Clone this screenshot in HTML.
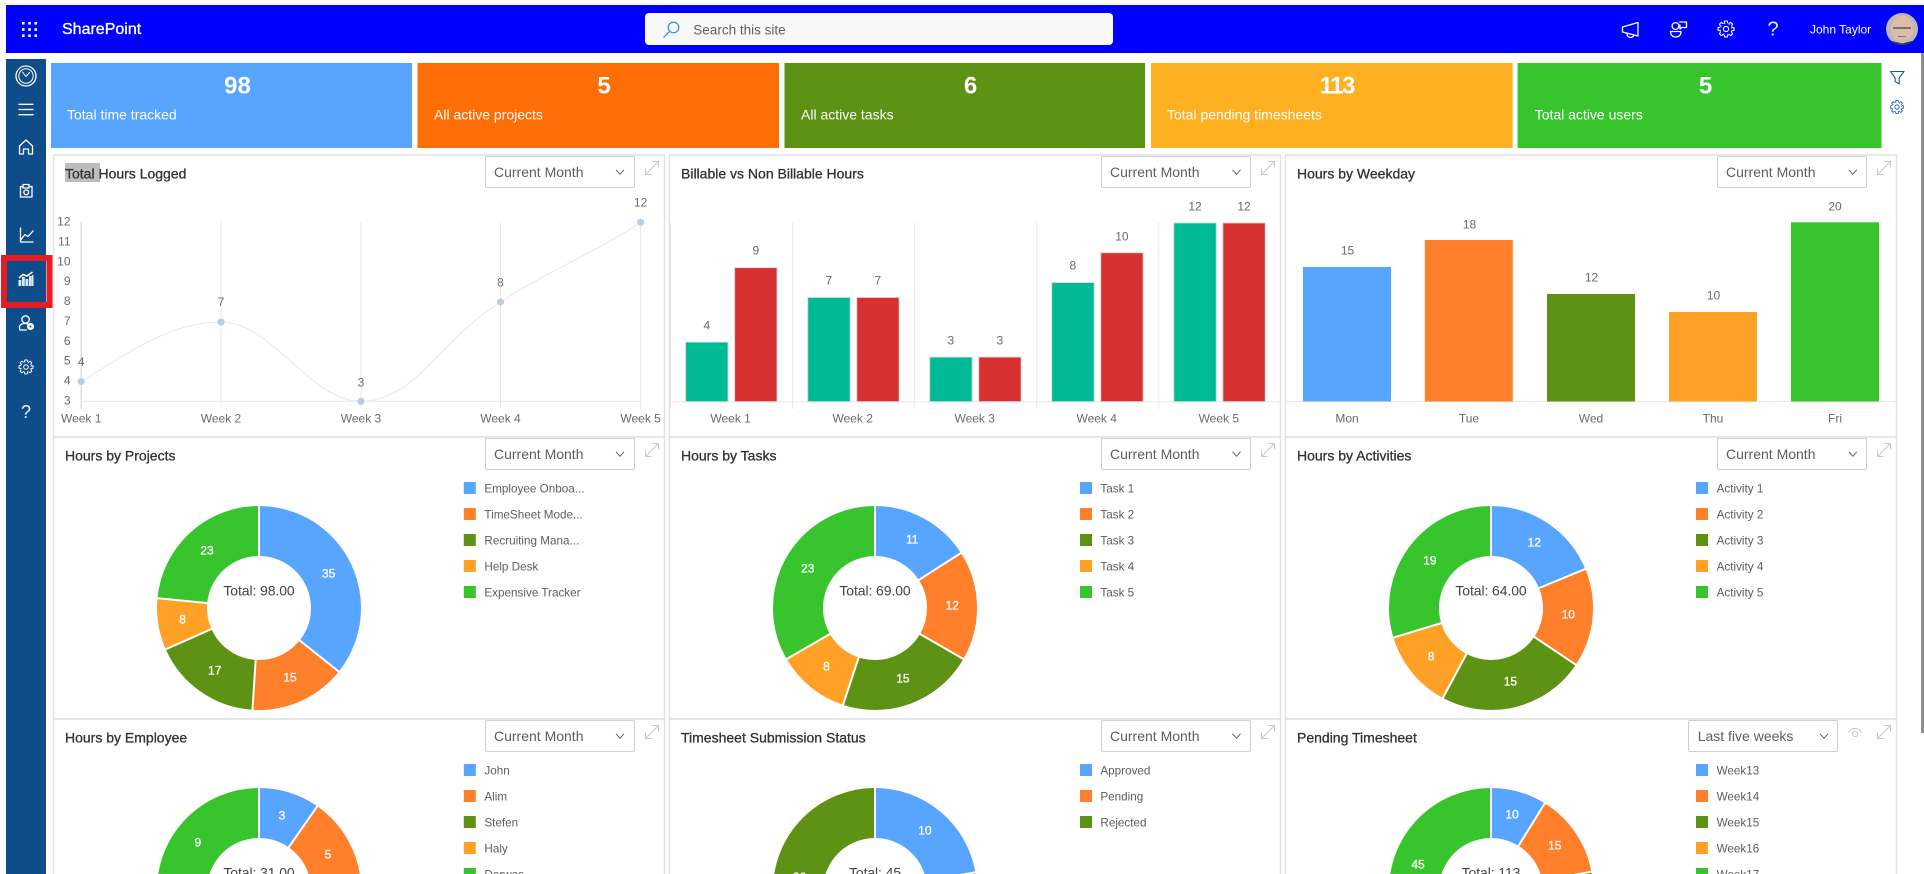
<!DOCTYPE html>
<html lang="en">
<head>
<meta charset="utf-8">
<title>SharePoint Dashboard</title>
<style>
html,body{margin:0;padding:0;background:#fff;width:1924px;height:874px;overflow:hidden}
svg{display:block;font-family:"Liberation Sans",sans-serif}
.title{font-size:14px;fill:#323130;stroke:#323130;stroke-width:.3;dominant-baseline:central}
.dd{font-size:14px;fill:#5f5e5c;dominant-baseline:central}
.box{fill:#fff;stroke:#cfcfcf;stroke-width:1}
.kv{font-size:24px;font-weight:700;fill:#fff;text-anchor:middle;dominant-baseline:central}
.kl{font-size:14px;fill:#fff;dominant-baseline:central}
.ax{font-size:12px;fill:#6a6a6a;dominant-baseline:central}
.m{text-anchor:middle}
.r{text-anchor:end}
.val{font-size:12px;fill:#6a6a6a;text-anchor:middle;dominant-baseline:central}
.dl{font-size:12px;fill:#fff;stroke:#fff;stroke-width:.3;text-anchor:middle;dominant-baseline:central}
.ct{font-size:14px;fill:#444;text-anchor:middle;dominant-baseline:central;letter-spacing:-.1px}
.lg{font-size:11.7px;fill:#605e5c;dominant-baseline:central}
.panel{fill:#fff;stroke:#e2e2e2;stroke-width:1.5}
.grid{stroke:#e8e8e8;stroke-width:1}
.sep{stroke:#fff;stroke-width:2}
.ic{fill:none;stroke:#fff;stroke-width:1.3;stroke-linejoin:round;stroke-linecap:round}
.tb{stroke:#dcdcdc;stroke-width:1}
</style>
</head>
<body>
<svg width="1924" height="874" viewBox="0 0 1924 874" xmlns="http://www.w3.org/2000/svg">
<defs>
<g id="chev"><path d="M-4 -2.2 L0 2.2 L4 -2.2" fill="none" stroke="#666" stroke-width="1"/></g>
<g id="exp"><path d="M-6.5 6.5 L6.5 -6.5 M0.5 -6.5 H6.5 V-0.5 M-6.5 0.5 V6.5 H-0.5" fill="none" stroke="#c6c6c6" stroke-width="1"/></g>
<g id="gear">
<circle r="6.2" fill="none" stroke="currentColor" stroke-width="1.2" stroke-dasharray="1.03 4" stroke-dashoffset="-2"/>
<circle r="2.8" fill="none" stroke="currentColor" stroke-width="1.2"/>
<g fill="none" stroke="currentColor" stroke-width="1.2" stroke-linejoin="round">
<path d="M-2 -6 L-1.4 -8.6 H1.4 L2 -6"/>
<path transform="rotate(45)" d="M-2 -6 L-1.4 -8.6 H1.4 L2 -6"/>
<path transform="rotate(90)" d="M-2 -6 L-1.4 -8.6 H1.4 L2 -6"/>
<path transform="rotate(135)" d="M-2 -6 L-1.4 -8.6 H1.4 L2 -6"/>
<path transform="rotate(180)" d="M-2 -6 L-1.4 -8.6 H1.4 L2 -6"/>
<path transform="rotate(225)" d="M-2 -6 L-1.4 -8.6 H1.4 L2 -6"/>
<path transform="rotate(270)" d="M-2 -6 L-1.4 -8.6 H1.4 L2 -6"/>
<path transform="rotate(315)" d="M-2 -6 L-1.4 -8.6 H1.4 L2 -6"/>
</g>
</g>
</defs>

<rect width="1924" height="874" fill="#fff"/>
<rect x="0" y="3" width="1924" height="1" fill="#fbe9dc"/>

<!-- Top bar -->
<rect x="6" y="5" width="1918" height="48" fill="#0000ff"/>
<g fill="#fff">
<rect x="22" y="22" width="2.6" height="2.6"/><rect x="28.2" y="22" width="2.6" height="2.6"/><rect x="34.4" y="22" width="2.6" height="2.6"/>
<rect x="22" y="28.2" width="2.6" height="2.6"/><rect x="28.2" y="28.2" width="2.6" height="2.6"/><rect x="34.4" y="28.2" width="2.6" height="2.6"/>
<rect x="22" y="34.4" width="2.6" height="2.6"/><rect x="28.2" y="34.4" width="2.6" height="2.6"/><rect x="34.4" y="34.4" width="2.6" height="2.6"/>
</g>
<text x="62" y="29.7" font-size="16" fill="#fff" stroke="#fff" stroke-width=".35" dominant-baseline="central">SharePoint</text>
<rect x="645" y="13" width="468" height="32" rx="4" fill="#f8f8f8"/>
<circle cx="673.5" cy="27.5" r="5.3" fill="none" stroke="#3b86d6" stroke-width="1.2"/>
<path d="M669.5 31.5 L663.5 37.5" stroke="#3b86d6" stroke-width="1.2"/>
<text x="693.3" y="30" font-size="13.5" fill="#605e5c" dominant-baseline="central">Search this site</text>

<path class="ic" d="M1622.5 27 L1638 22.5 V36 L1622.5 32 Z M1627 33.5 a3.6 3.6 0 0 0 7 1.5"/>
<g class="ic">
<circle cx="1675.5" cy="26" r="3.4"/>
<path d="M1679.5 22 H1686.5 V27.5 H1682 L1680 29 V25"/>
<path d="M1670.5 31.5 H1681 C1681 35 1679 37 1675.7 37 C1672.5 37 1670.5 35 1670.5 31.5Z"/>
</g>
<g transform="translate(1726,29) scale(.93)" color="#fff"><use href="#gear"/></g>
<text x="1773" y="29.5" font-size="20" fill="#fff" fill-opacity=".92" text-anchor="middle" dominant-baseline="central">?</text>
<text x="1810" y="29.7" font-size="12" fill="#fff" dominant-baseline="central">John Taylor</text>
<clipPath id="av"><circle cx="1902" cy="29" r="16"/></clipPath>
<g clip-path="url(#av)">
<rect x="1886" y="13" width="32" height="32" fill="#bdb8b3"/>
<ellipse cx="1902" cy="29" rx="11" ry="13.5" fill="#dcbcaa"/>
<path d="M1893 28 H1911" stroke="#75645a" stroke-width="1.8"/>
<path d="M1895 35 Q1902 39 1909 35 L1907 41.5 H1897Z" fill="#c9bfb6"/>
<path d="M1898 36.5 H1906" stroke="#8d6f60" stroke-width="1"/>
<path d="M1886 46 L1892 41 L1902 43.5 L1912 41 L1918 46Z" fill="#3a3735"/>
</g>

<!-- Left rail -->
<rect x="6" y="59" width="40" height="815" fill="#0e4d89"/>
<g class="ic">
<circle cx="26" cy="76" r="10"/><circle cx="26" cy="76" r="7.2" stroke-width="1"/><path d="M22.5 72 L26 76.5 L29.5 72.5" stroke-width="1"/>
<path d="M19 104.3 H33 M19 109.5 H33 M19 114.7 H33"/>
<path d="M19.5 146 L26 140 L32.5 146 V154 H28.5 V149 H23.5 V154 H19.5Z"/>
<path d="M23 186.5 H20.5 V197 H32 V186.5 H29 M23 184.5 H29 V188 H23Z"/><circle cx="26.2" cy="192.3" r="2.4"/>
<path d="M20.5 228 V242 H33 M21 239.5 L25 234.5 L28 236.5 L33 231"/>
</g>
<g fill="#dbe8f7">
<rect x="18.5" y="280" width="2.8" height="6"/><rect x="22" y="277" width="2.8" height="9"/><rect x="25.5" y="279" width="2.8" height="7"/><rect x="29" y="276" width="2.8" height="10"/><rect x="32" y="275" width="1.5" height="11"/>
</g>
<path d="M19 278 L23 274.5 L27 276 L32.5 272" fill="none" stroke="#fff" stroke-width="1.5"/>
<g class="ic">
<circle cx="25.6" cy="319.5" r="3.7"/>
<path d="M20 330 C18.2 325.5 21 323.5 25 323.5 C26.5 323.5 27.5 323.8 28.2 324.2 M20 330 H26.5"/>
</g>
<circle cx="30.5" cy="326.5" r="3.6" fill="#fff"/><circle cx="30.5" cy="326.5" r="1" fill="#0e4d89"/>
<g transform="translate(26,367) scale(.82)" color="#fff"><use href="#gear"/></g>
<text x="26" y="412" font-size="18" fill="#fff" fill-opacity=".92" text-anchor="middle" dominant-baseline="central">?</text>
<rect x="4" y="258" width="45.5" height="47" fill="none" stroke="#e31d23" stroke-width="6"/>

<!-- KPI cards -->
<rect x="51" y="63" width="361" height="85" fill="#57a5ff"/>
<rect x="417.5" y="63" width="361.5" height="85" fill="#ff6d05"/>
<rect x="784.5" y="63" width="360.5" height="85" fill="#5d9215"/>
<rect x="1151" y="63" width="361.6" height="85" fill="#feb020"/>
<rect x="1517.6" y="63" width="363.9" height="85" fill="#38c42c"/>
<text class="kv" x="237.5" y="86">98</text><text class="kl" x="67" y="114.3">Total time tracked</text>
<text class="kv" x="604" y="86">5</text><text class="kl" x="434" y="114.3">All active projects</text>
<text class="kv" x="970.5" y="86">6</text><text class="kl" x="801" y="114.3">All active tasks</text>
<text class="kv" x="1336.7" y="86" letter-spacing="-1.5">113</text><text class="kl" x="1167" y="114.3">Total pending timesheets</text>
<text class="kv" x="1705.5" y="86">5</text><text class="kl" x="1534.7" y="114.3">Total active users</text>
<path d="M1890.5 71.5 H1904 L1899.2 78 V84 L1895.2 81.5 V78Z" fill="none" stroke="#1c5a9c" stroke-width="1.1" stroke-linejoin="round"/>
<g transform="translate(1897,107) scale(.76)" color="#2a68ab"><use href="#gear"/></g>

<!-- Panels -->
<rect class="panel" x="53.5" y="155" width="611" height="282"/>
<rect class="panel" x="669.5" y="155" width="611" height="282"/>
<rect class="panel" x="1285.5" y="155" width="611" height="282"/>
<rect class="panel" x="53.5" y="437" width="611" height="282"/>
<rect class="panel" x="669.5" y="437" width="611" height="282"/>
<rect class="panel" x="1285.5" y="437" width="611" height="282"/>
<rect class="panel" x="53.5" y="719" width="611" height="170"/>
<rect class="panel" x="669.5" y="719" width="611" height="170"/>
<rect class="panel" x="1285.5" y="719" width="611" height="170"/>

<!-- Titles -->
<rect x="65" y="163" width="35" height="19" fill="#bdbdbd"/>
<text class="title" x="65" y="173.3">Total Hours Logged</text>
<text class="title" x="681" y="173.3">Billable vs Non Billable Hours</text>
<text class="title" x="1297" y="173.3">Hours by Weekday</text>
<text class="title" x="65" y="455.3">Hours by Projects</text>
<text class="title" x="681" y="455.3">Hours by Tasks</text>
<text class="title" x="1297" y="455.3">Hours by Activities</text>
<text class="title" x="65" y="737.3">Hours by Employee</text>
<text class="title" x="681" y="737.3">Timesheet Submission Status</text>
<text class="title" x="1297" y="737.3">Pending Timesheet</text>

<!-- Dropdowns -->
<rect class="box" x="485.5" y="156.5" width="149" height="31" rx="1.5"/><text class="dd" x="494" y="172">Current Month</text><use href="#chev" x="620" y="172"/><use href="#exp" x="652" y="168"/>
<rect class="box" x="1101.5" y="156.5" width="149" height="31" rx="1.5"/><text class="dd" x="1110" y="172">Current Month</text><use href="#chev" x="1236.5" y="172"/><use href="#exp" x="1268" y="168"/>
<rect class="box" x="1717.5" y="156.5" width="149" height="31" rx="1.5"/><text class="dd" x="1726" y="172">Current Month</text><use href="#chev" x="1852.8" y="172"/><use href="#exp" x="1884" y="168"/>
<rect class="box" x="485.5" y="438.5" width="149" height="31" rx="1.5"/><text class="dd" x="494" y="454">Current Month</text><use href="#chev" x="620" y="454"/><use href="#exp" x="652" y="450"/>
<rect class="box" x="1101.5" y="438.5" width="149" height="31" rx="1.5"/><text class="dd" x="1110" y="454">Current Month</text><use href="#chev" x="1236.5" y="454"/><use href="#exp" x="1268" y="450"/>
<rect class="box" x="1717.5" y="438.5" width="149" height="31" rx="1.5"/><text class="dd" x="1726" y="454">Current Month</text><use href="#chev" x="1852.8" y="454"/><use href="#exp" x="1884" y="450"/>
<rect class="box" x="485.5" y="720.5" width="149" height="31" rx="1.5"/><text class="dd" x="494" y="736">Current Month</text><use href="#chev" x="620" y="736"/><use href="#exp" x="652" y="732"/>
<rect class="box" x="1101.5" y="720.5" width="149" height="31" rx="1.5"/><text class="dd" x="1110" y="736">Current Month</text><use href="#chev" x="1236.5" y="736"/><use href="#exp" x="1268" y="732"/>
<rect class="box" x="1688.5" y="720.5" width="149" height="31" rx="1.5"/><text class="dd" x="1697.7" y="736">Last five weeks</text><use href="#chev" x="1824" y="736"/><use href="#exp" x="1884" y="732"/>
<g fill="none" stroke="#c6c6c6" stroke-width="1"><path d="M1848.5 733 C1851 727 1859 727 1861.5 733"/><circle cx="1855" cy="734" r="2.6"/></g>

<!-- Line chart -->
<line x1="81.2" y1="222" x2="81.2" y2="409" stroke="#cfcfcf"/>
<line class="grid" x1="221" y1="222" x2="221" y2="409"/>
<line class="grid" x1="361" y1="222" x2="361" y2="409"/>
<line class="grid" x1="500.5" y1="222" x2="500.5" y2="409"/>
<line class="grid" x1="640.6" y1="222" x2="640.6" y2="409"/>
<line class="grid" x1="81" y1="401.3" x2="641" y2="401.3"/>
<path d="M81.2 381.5 C130 352 170 322 221 322 C272 322 310 401.3 361 401.3 C415 401.3 440 340 500.5 302 C550 270 600 250 640.6 222.3" fill="none" stroke="#e8e8e8" stroke-width="1"/>
<g fill="#b7cfe6">
<circle cx="81.2" cy="381.5" r="3.6"/><circle cx="221" cy="322" r="3.6"/><circle cx="361" cy="401.3" r="3.6"/><circle cx="500.5" cy="302" r="3.6"/><circle cx="640.6" cy="222.3" r="3.6"/>
</g>
<g>
<text class="ax r" x="70.5" y="221.6">12</text><text class="ax r" x="70.5" y="241.5">11</text><text class="ax r" x="70.5" y="261.4">10</text><text class="ax r" x="70.5" y="281.2">9</text><text class="ax r" x="70.5" y="301.1">8</text><text class="ax r" x="70.5" y="321">7</text><text class="ax r" x="70.5" y="340.8">6</text><text class="ax r" x="70.5" y="360.7">5</text><text class="ax r" x="70.5" y="380.6">4</text><text class="ax r" x="70.5" y="400.4">3</text>
<text class="val" x="81.2" y="362">4</text><text class="val" x="221" y="302">7</text><text class="val" x="361" y="382.7">3</text><text class="val" x="500.5" y="282.7">8</text><text class="val" x="640.6" y="202.7">12</text>
<text class="ax m" x="81.2" y="418.7">Week 1</text><text class="ax m" x="221" y="418.7">Week 2</text><text class="ax m" x="361" y="418.7">Week 3</text><text class="ax m" x="500.5" y="418.7">Week 4</text><text class="ax m" x="640.6" y="418.7">Week 5</text>
</g>

<!-- Billable -->
<g>
<line class="grid" x1="670.6" y1="222.7" x2="670.6" y2="409"/><line class="grid" x1="792.7" y1="222.7" x2="792.7" y2="409"/><line class="grid" x1="914.7" y1="222.7" x2="914.7" y2="409"/><line class="grid" x1="1036.7" y1="222.7" x2="1036.7" y2="409"/><line class="grid" x1="1158.8" y1="222.7" x2="1158.8" y2="409"/>
<line class="grid" x1="670" y1="401.7" x2="1280" y2="401.7"/>
<g fill="#00ba96" class="tb">
<rect x="685.6" y="342.1" width="42.5" height="59.6"/><rect x="807.7" y="297.4" width="42.5" height="104.3"/><rect x="929.7" y="357" width="42.5" height="44.7"/><rect x="1051.7" y="282.5" width="42.5" height="119.2"/><rect x="1173.8" y="222.9" width="42.5" height="178.8"/>
</g>
<g fill="#d63031" class="tb">
<rect x="734.6" y="267.6" width="42.5" height="134.1"/><rect x="856.7" y="297.4" width="42.5" height="104.3"/><rect x="978.7" y="357" width="42.5" height="44.7"/><rect x="1100.7" y="252.7" width="42.5" height="149"/><rect x="1222.8" y="222.9" width="42.5" height="178.8"/>
</g>
<text class="val" x="706.8" y="325.5">4</text><text class="val" x="755.8" y="250.7">9</text>
<text class="val" x="828.9" y="280.5">7</text><text class="val" x="877.9" y="280.5">7</text>
<text class="val" x="950.9" y="340.5">3</text><text class="val" x="999.9" y="340.5">3</text>
<text class="val" x="1072.9" y="265.5">8</text><text class="val" x="1121.9" y="236.5">10</text>
<text class="val" x="1195" y="206.7">12</text><text class="val" x="1244" y="206.7">12</text>
<text class="ax m" x="730.6" y="418.7">Week 1</text><text class="ax m" x="852.7" y="418.7">Week 2</text><text class="ax m" x="974.7" y="418.7">Week 3</text><text class="ax m" x="1096.7" y="418.7">Week 4</text><text class="ax m" x="1218.8" y="418.7">Week 5</text>
</g>

<!-- Weekday -->
<g>
<line class="grid" x1="1286" y1="401.5" x2="1896" y2="401.5"/>
<rect x="1303" y="267" width="88" height="134.5" fill="#57a5ff"/>
<rect x="1424.8" y="240" width="88" height="161.5" fill="#ff7f2a"/>
<rect x="1547" y="294" width="88" height="107.5" fill="#5d9215"/>
<rect x="1669" y="312" width="88" height="89.5" fill="#ffa126"/>
<rect x="1791" y="222.3" width="88" height="179.2" fill="#38c42c"/>
<text class="val" x="1347.5" y="250.7">15</text><text class="val" x="1469.5" y="224.7">18</text><text class="val" x="1591.5" y="277.7">12</text><text class="val" x="1713.5" y="295.7">10</text><text class="val" x="1835" y="206.7">20</text>
<text class="ax m" x="1347" y="418.7">Mon</text><text class="ax m" x="1469" y="418.7">Tue</text><text class="ax m" x="1591" y="418.7">Wed</text><text class="ax m" x="1713" y="418.7">Thu</text><text class="ax m" x="1835" y="418.7">Fri</text>
</g>

<!-- Donuts row 2 -->
<g transform="translate(259,608)">
<g transform="rotate(-90)" fill="none" stroke-width="50">
<circle r="77" pathLength="98" stroke="#57a5ff" stroke-dasharray="35 98"/>
<circle r="77" pathLength="98" stroke="#ff7f2a" stroke-dasharray="15 98" stroke-dashoffset="-35"/>
<circle r="77" pathLength="98" stroke="#5d9215" stroke-dasharray="17 98" stroke-dashoffset="-50"/>
<circle r="77" pathLength="98" stroke="#ffa126" stroke-dasharray="8 98" stroke-dashoffset="-67"/>
<circle r="77" pathLength="98" stroke="#38c42c" stroke-dasharray="23 98" stroke-dashoffset="-75"/>
</g>
<line class="sep" y1="-50" y2="-104"/><line class="sep" y1="-50" y2="-104" transform="rotate(128.57)"/><line class="sep" y1="-50" y2="-104" transform="rotate(183.67)"/><line class="sep" y1="-50" y2="-104" transform="rotate(246.12)"/><line class="sep" y1="-50" y2="-104" transform="rotate(275.51)"/>
</g>
<text class="dl" x="328.6" y="573.3">35</text><text class="dl" x="290" y="677.7">15</text><text class="dl" x="214.7" y="670.7">17</text><text class="dl" x="182.6" y="619.3">8</text><text class="dl" x="207" y="550.7">23</text>
<text class="ct" x="259" y="590.3">Total: 98.00</text>

<g transform="translate(875,608)">
<g transform="rotate(-90)" fill="none" stroke-width="50">
<circle r="77" pathLength="69" stroke="#57a5ff" stroke-dasharray="11 69"/>
<circle r="77" pathLength="69" stroke="#ff7f2a" stroke-dasharray="12 69" stroke-dashoffset="-11"/>
<circle r="77" pathLength="69" stroke="#5d9215" stroke-dasharray="15 69" stroke-dashoffset="-23"/>
<circle r="77" pathLength="69" stroke="#ffa126" stroke-dasharray="8 69" stroke-dashoffset="-38"/>
<circle r="77" pathLength="69" stroke="#38c42c" stroke-dasharray="23 69" stroke-dashoffset="-46"/>
</g>
<line class="sep" y1="-50" y2="-104"/><line class="sep" y1="-50" y2="-104" transform="rotate(57.39)"/><line class="sep" y1="-50" y2="-104" transform="rotate(120)"/><line class="sep" y1="-50" y2="-104" transform="rotate(198.26)"/><line class="sep" y1="-50" y2="-104" transform="rotate(240)"/>
</g>
<text class="dl" x="912.2" y="539.7">11</text><text class="dl" x="952.2" y="605.7">12</text><text class="dl" x="902.9" y="678.3">15</text><text class="dl" x="826.5" y="666.3">8</text><text class="dl" x="807.8" y="568.3">23</text>
<text class="ct" x="875" y="590.3">Total: 69.00</text>

<g transform="translate(1491,608)">
<g transform="rotate(-90)" fill="none" stroke-width="50">
<circle r="77" pathLength="64" stroke="#57a5ff" stroke-dasharray="12 64"/>
<circle r="77" pathLength="64" stroke="#ff7f2a" stroke-dasharray="10 64" stroke-dashoffset="-12"/>
<circle r="77" pathLength="64" stroke="#5d9215" stroke-dasharray="15 64" stroke-dashoffset="-22"/>
<circle r="77" pathLength="64" stroke="#ffa126" stroke-dasharray="8 64" stroke-dashoffset="-37"/>
<circle r="77" pathLength="64" stroke="#38c42c" stroke-dasharray="19 64" stroke-dashoffset="-45"/>
</g>
<line class="sep" y1="-50" y2="-104"/><line class="sep" y1="-50" y2="-104" transform="rotate(67.5)"/><line class="sep" y1="-50" y2="-104" transform="rotate(123.75)"/><line class="sep" y1="-50" y2="-104" transform="rotate(208.13)"/><line class="sep" y1="-50" y2="-104" transform="rotate(253.13)"/>
</g>
<text class="dl" x="1534.2" y="542.7">12</text><text class="dl" x="1568.3" y="614.3">10</text><text class="dl" x="1510.4" y="681.7">15</text><text class="dl" x="1431.1" y="656.3">8</text><text class="dl" x="1429.9" y="560.7">19</text>
<text class="ct" x="1491" y="590.3">Total: 64.00</text>

<!-- Donuts row 3 -->
<g transform="translate(259,890)">
<g transform="rotate(-90)" fill="none" stroke-width="50">
<circle r="77" pathLength="31" stroke="#57a5ff" stroke-dasharray="3 31"/>
<circle r="77" pathLength="31" stroke="#ff7f2a" stroke-dasharray="5 31" stroke-dashoffset="-3"/>
<circle r="77" pathLength="31" stroke="#5d9215" stroke-dasharray="7 31" stroke-dashoffset="-8"/>
<circle r="77" pathLength="31" stroke="#ffa126" stroke-dasharray="7 31" stroke-dashoffset="-15"/>
<circle r="77" pathLength="31" stroke="#38c42c" stroke-dasharray="9 31" stroke-dashoffset="-22"/>
</g>
<line class="sep" y1="-50" y2="-104"/><line class="sep" y1="-50" y2="-104" transform="rotate(34.84)"/><line class="sep" y1="-50" y2="-104" transform="rotate(92.9)"/><line class="sep" y1="-50" y2="-104" transform="rotate(255.5)"/>
</g>
<text class="dl" x="282" y="815.7">3</text><text class="dl" x="328" y="854.3">5</text><text class="dl" x="197.8" y="842.7">9</text>
<text class="ct" x="259" y="872.3">Total: 31.00</text>

<g transform="translate(875,890)">
<g transform="rotate(-90)" fill="none" stroke-width="50">
<circle r="77" pathLength="45" stroke="#57a5ff" stroke-dasharray="10 45"/>
<circle r="77" pathLength="45" stroke="#ff7f2a" stroke-dasharray="15 45" stroke-dashoffset="-10"/>
<circle r="77" pathLength="45" stroke="#5d9215" stroke-dasharray="20 45" stroke-dashoffset="-25"/>
</g>
<line class="sep" y1="-50" y2="-104"/><line class="sep" y1="-50" y2="-104" transform="rotate(80)"/><line class="sep" y1="-50" y2="-104" transform="rotate(200)"/>
</g>
<text class="dl" x="924.9" y="830.7">10</text><text class="dl" x="799.6" y="877">20</text>
<text class="ct" x="875" y="872.3">Total: 45</text>

<g transform="translate(1491,890)">
<g transform="rotate(-90)" fill="none" stroke-width="50">
<circle r="77" pathLength="113" stroke="#57a5ff" stroke-dasharray="10 113"/>
<circle r="77" pathLength="113" stroke="#ff7f2a" stroke-dasharray="15 113" stroke-dashoffset="-10"/>
<circle r="77" pathLength="113" stroke="#5d9215" stroke-dasharray="20 113" stroke-dashoffset="-25"/>
<circle r="77" pathLength="113" stroke="#ffa126" stroke-dasharray="23 113" stroke-dashoffset="-45"/>
<circle r="77" pathLength="113" stroke="#38c42c" stroke-dasharray="45 113" stroke-dashoffset="-68"/>
</g>
<line class="sep" y1="-50" y2="-104"/><line class="sep" y1="-50" y2="-104" transform="rotate(31.86)"/><line class="sep" y1="-50" y2="-104" transform="rotate(79.65)"/><line class="sep" y1="-50" y2="-104" transform="rotate(216.64)"/>
</g>
<text class="dl" x="1512" y="814.7">10</text><text class="dl" x="1554.7" y="845.7">15</text><text class="dl" x="1418" y="864.3">45</text>
<text class="ct" x="1491" y="872.3">Total: 113</text>

<!-- Legends -->
<g>
<rect x="463.8" y="482" width="12" height="12" fill="#57a5ff"/><text class="lg" x="484.4" y="489">Employee Onboa...</text>
<rect x="463.8" y="508" width="12" height="12" fill="#ff7f2a"/><text class="lg" x="484.4" y="515">TimeSheet Mode...</text>
<rect x="463.8" y="534" width="12" height="12" fill="#5d9215"/><text class="lg" x="484.4" y="541">Recruiting Mana...</text>
<rect x="463.8" y="560" width="12" height="12" fill="#ffa126"/><text class="lg" x="484.4" y="567">Help Desk</text>
<rect x="463.8" y="586" width="12" height="12" fill="#38c42c"/><text class="lg" x="484.4" y="593">Expensive Tracker</text>

<rect x="1080" y="482" width="12" height="12" fill="#57a5ff"/><text class="lg" x="1100.4" y="489">Task 1</text>
<rect x="1080" y="508" width="12" height="12" fill="#ff7f2a"/><text class="lg" x="1100.4" y="515">Task 2</text>
<rect x="1080" y="534" width="12" height="12" fill="#5d9215"/><text class="lg" x="1100.4" y="541">Task 3</text>
<rect x="1080" y="560" width="12" height="12" fill="#ffa126"/><text class="lg" x="1100.4" y="567">Task 4</text>
<rect x="1080" y="586" width="12" height="12" fill="#38c42c"/><text class="lg" x="1100.4" y="593">Task 5</text>

<rect x="1696" y="482" width="12" height="12" fill="#57a5ff"/><text class="lg" x="1716.6" y="489">Activity 1</text>
<rect x="1696" y="508" width="12" height="12" fill="#ff7f2a"/><text class="lg" x="1716.6" y="515">Activity 2</text>
<rect x="1696" y="534" width="12" height="12" fill="#5d9215"/><text class="lg" x="1716.6" y="541">Activity 3</text>
<rect x="1696" y="560" width="12" height="12" fill="#ffa126"/><text class="lg" x="1716.6" y="567">Activity 4</text>
<rect x="1696" y="586" width="12" height="12" fill="#38c42c"/><text class="lg" x="1716.6" y="593">Activity 5</text>

<rect x="463.8" y="764" width="12" height="12" fill="#57a5ff"/><text class="lg" x="484.4" y="771">John</text>
<rect x="463.8" y="790" width="12" height="12" fill="#ff7f2a"/><text class="lg" x="484.4" y="797">Alim</text>
<rect x="463.8" y="816" width="12" height="12" fill="#5d9215"/><text class="lg" x="484.4" y="823">Stefen</text>
<rect x="463.8" y="842" width="12" height="12" fill="#ffa126"/><text class="lg" x="484.4" y="849">Haly</text>
<rect x="463.8" y="868" width="12" height="12" fill="#38c42c"/><text class="lg" x="484.4" y="875">Darwas</text>

<rect x="1080" y="764" width="12" height="12" fill="#57a5ff"/><text class="lg" x="1100.4" y="771">Approved</text>
<rect x="1080" y="790" width="12" height="12" fill="#ff7f2a"/><text class="lg" x="1100.4" y="797">Pending</text>
<rect x="1080" y="816" width="12" height="12" fill="#5d9215"/><text class="lg" x="1100.4" y="823">Rejected</text>

<rect x="1696" y="764" width="12" height="12" fill="#57a5ff"/><text class="lg" x="1716.6" y="771">Week13</text>
<rect x="1696" y="790" width="12" height="12" fill="#ff7f2a"/><text class="lg" x="1716.6" y="797">Week14</text>
<rect x="1696" y="816" width="12" height="12" fill="#5d9215"/><text class="lg" x="1716.6" y="823">Week15</text>
<rect x="1696" y="842" width="12" height="12" fill="#ffa126"/><text class="lg" x="1716.6" y="849">Week16</text>
<rect x="1696" y="868" width="12" height="12" fill="#38c42c"/><text class="lg" x="1716.6" y="875">Week17</text>
</g>

<!-- Scrollbar -->
<rect x="1921" y="53" width="3" height="680" fill="#8c8c8c"/>
</svg>
</body>
</html>
